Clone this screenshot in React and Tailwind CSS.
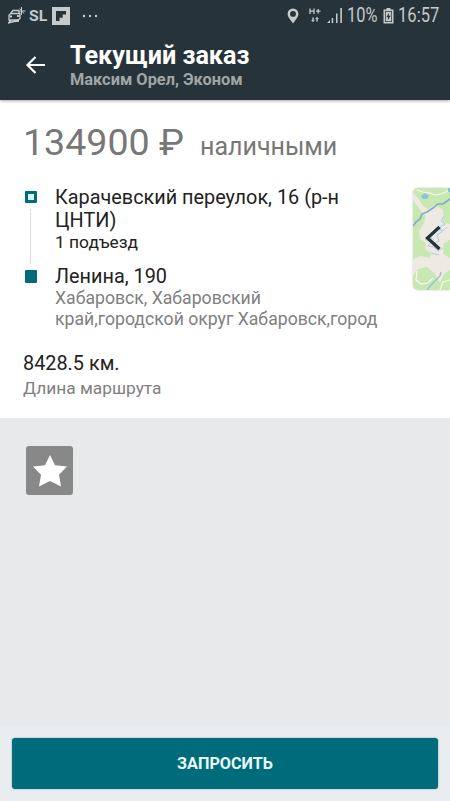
function StatusBar() {
  return (
    <div className="flex h-8 items-center justify-between pl-[7px] pr-[10px] text-[#c5cacc]">
      <div className="flex items-center pb-px">
        <svg width="19" height="19" viewBox="0 0 19 19" fill="none" stroke="currentColor" strokeWidth="1.3">
          <path d="M3.5 7.5L6 4.5H11.5L12.5 7.5 M2 9L4 7.5H13V12.5L11 14H2Z M1 17L7 15.5L12 15" />
          <path strokeWidth="2" d="M2.5 10.5H5 M10 10H12.5 M3 14V16 M11 13.5V15.5" />
          <path strokeWidth="1" d="M14.5 1V9 M11.5 5H18.5 M12.5 2.5L17 7.5" />
        </svg>
        <span className="ml-[3px] inline-block w-[19px] origin-left scale-x-[1.13] text-[14px] font-bold leading-none">SL</span>
        <svg className="ml-[4px]" width="18" height="18" viewBox="0 0 18 18">
          <path fill="currentColor" d="M0 0H18V18H0Z" />
          <path d="M4 4H14V7.5H10.7V10.7H7.5V14H4Z" fill="#27333a" />
        </svg>
        <svg className="ml-[12px]" width="17" height="4" viewBox="0 0 17 4" fill="currentColor">
          <circle cx="2" cy="2" r="1.2" /><circle cx="8" cy="2" r="1.2" /><circle cx="14" cy="2" r="1.2" />
        </svg>
      </div>
      <div className="flex items-center pb-px">
        <svg width="12" height="16" viewBox="0 0 12 16">
          <path fill="currentColor" fillRule="evenodd" d="M6 .5A5.4 5.4 0 0 0 .6 6C.6 9.2 4.5 13 6 15.5C7.5 13 11.4 9.2 11.4 6A5.4 5.4 0 0 0 6 .5ZM6 3A2.9 2.9 0 1 1 6 8.8A2.9 2.9 0 0 1 6 3Z" />
        </svg>
        <svg className="ml-[10px]" width="12" height="15" viewBox="0 0 12 15" fill="none" stroke="currentColor" strokeWidth="1.3">
          <path d="M1 .5V6 M5 .5V6 M1 3.2H5 M7 3.2H11.5 M9.2 1V5.5" />
          <path strokeWidth="1.5" d="M4 9.5V13.5 M8 9.5V13.5" />
          <path strokeWidth="1" d="M2.5 12L4 13.5L5.5 12 M6.5 11L8 9.5L9.5 11" />
        </svg>
        <svg className="ml-[6px]" width="16" height="15" viewBox="0 0 16 15" fill="currentColor">
          <path d="M0 15L3 12V15Z M4.7 10H6.2V15H4.7Z M9 5.5H10.5V15H9Z M13.3 0H14.9V15H13.3Z" />
        </svg>
        <span className="ml-[4px] inline-block w-[31px] origin-left scale-x-[.84] whitespace-nowrap text-[19.5px] leading-none">10%</span>
        <svg className="ml-[5px]" width="11" height="16" viewBox="0 0 11 16">
          <path fill="currentColor" fillRule="evenodd" d="M3.5 0H7.5V1.5H10.5V15.5H.5V1.5H3.5ZM2 3V14H9V3Z" />
          <path fill="currentColor" d="M2.7 3.7H8.3V13.3H2.7Z" />
          <path fill="#27333a" d="M6.3 4.5L3.3 9.2H5.2L4.7 12.5L7.7 7.8H5.8Z" />
        </svg>
        <span className="ml-[4px] inline-block w-[42px] origin-left scale-x-[.85] whitespace-nowrap text-[19.5px] leading-none">16:57</span>
      </div>
    </div>
  );
}

function Header() {
  return (
    <header className="relative z-10 h-[100px] shrink-0 bg-[#27333a] shadow-[0_1px_3px_rgba(0,0,0,0.35)]">
      <StatusBar />
      <div className="flex pl-[25px]">
        <svg className="mt-[23px]" width="21" height="20" viewBox="0 0 21 20" fill="none" stroke="#fff" strokeWidth="2.2">
          <path d="M20 10H2.5 M10.5 2L2.5 10L10.5 18" />
        </svg>
        <div className="ml-[24px] pt-[9px]">
          <h1 className="whitespace-nowrap text-[25.2px] font-bold leading-[30px] text-white">Текущий заказ</h1>
          <p className="whitespace-nowrap text-[16.35px] font-bold leading-[18px] text-[#a0a6a8]">Максим Орел, Эконом</p>
        </div>
      </div>
    </header>
  );
}

function MapTab() {
  return (
    <div className="absolute right-0 top-[88px] h-[102px] w-[37px] overflow-hidden rounded-l-[5px] shadow-[0_0_2px_rgba(0,0,0,0.25)]">
      <svg width="37" height="102" viewBox="0 0 37 102" fill="none">
        <path fill="#c7e8b1" d="M0 0H37V102H0Z" />
        <path fill="#eee9e2" d="M0 5L5 10L10 18L15 21L22 17L30 22L31 28L29 34L37 36V52L31 55L30 66L37 70V82L31 86L27 95L22 86L14 79L5 81L0 88V71L8 68L17 70L18 65L12 61L13 55L7 51L6 43L11 35L13 28L7 22L0 12Z" />
        <path stroke="#7fa9d2" strokeWidth="1.6" d="M0 38L3 34L7 31L9 26L14 24L20 20L25 16L30 16L37 11" />
        <path stroke="#adcde8" d="M31 28L28 33L32 36L27 39L29 44L24 47L26 53L20 56L23 61 M12 51L18 54L15 58L21 59L25 63L30 60 M24 41L30 43L34 39 M18 65L26 67 M17 49L21 52" />
        <path stroke="#9bbdd5" strokeWidth="1.3" d="M14 102L18 97L22 93L27 88L28 84" />
        <path stroke="#f6faf0" strokeWidth="1.2" d="M4 2L10 4L17 5L22 7L28 6L37 2 M4 83L3 92L8 96L15 95L20 90 M27 102L30 94L37 92" />
        <path fill="#8cc4df" d="M8 8L12 5L16 8L14 11L10 11Z M35 0H37V4H35Z" />
        <path stroke="#27333a" strokeWidth="3.2" d="M26.5 39L14.5 50L26.5 61" />
      </svg>
    </div>
  );
}

function Route() {
  return (
    <div className="mt-[22px] flex">
      <div className="flex w-[32px] shrink-0 flex-col items-start pl-[2px] pt-[5px]">
        <div className="h-3 w-3 rounded-[1px] border-[3px] border-[#006b7a] bg-[#d7f5f7]" />
        <div className="ml-[5px] mt-[6px] h-[55px] w-px bg-[#dcdcdc]" />
        <div className="mt-[6px] h-[13px] w-3 rounded-[1px] bg-[#006b7a]" />
      </div>
      <div className="whitespace-nowrap text-[#222]">
        <p className="text-[19.85px] leading-[23px]">Карачевский переулок, 16 (р-н<br />ЦНТИ)</p>
        <p className="text-[17.4px] leading-[21px]">1 подъезд</p>
        <p className="mt-[12px] text-[19.85px] leading-[23px]">Ленина, 190</p>
        <p className="text-[17.65px] leading-[21px] text-[#808080]">Хабаровск, Хабаровский<br />край,городской округ Хабаровск,город</p>
      </div>
    </div>
  );
}

export default function App() {
  return (
    <div className="flex h-[801px] w-[450px] flex-col overflow-hidden bg-[#e8e9eb] font-['Roboto',sans-serif]">
      <Header />
      <main className="relative h-[318px] shrink-0 bg-white pl-[23px]">
        <div className="flex items-baseline whitespace-nowrap pt-[21px] text-[#777]">
          <span className="text-[37.6px] leading-[43px]">134900 ₽</span>
          <span className="ml-[16px] text-[25px] leading-[30px]">наличными</span>
        </div>
        <Route />
        <p className="mt-[22px] text-[19.85px] leading-[23px] text-[#222]">8428.5 км.</p>
        <p className="mt-[3px] text-[17.35px] leading-[21px] text-[#808080]">Длина маршрута</p>
        <MapTab />
      </main>
      <section className="flex-1 pl-[26px] pt-[28px]">
        <button className="flex h-[49px] w-[47px] items-center justify-center rounded-[3px] bg-[#888]">
          <svg width="34" height="32" viewBox="0 0 34 32" fill="#fff">
            <path d="M17 0L22 10.3L34 11.5L26 19.8L28 31.5L17 26L6 31.5L8 19.8L0 11.5L12 10.3Z" />
          </svg>
        </button>
      </section>
      <footer className="h-[75px] shrink-0 bg-[#e9edf0] px-3 pt-3">
        <button className="flex h-[51px] w-full items-center justify-center rounded-[3px] bg-[#006b7a] pt-[2px] text-[16.2px] font-bold text-[#e8fafa] shadow-[0_0_2px_rgba(0,107,122,0.5)]">
          ЗАПРОСИТЬ
        </button>
      </footer>
    </div>
  );
}
